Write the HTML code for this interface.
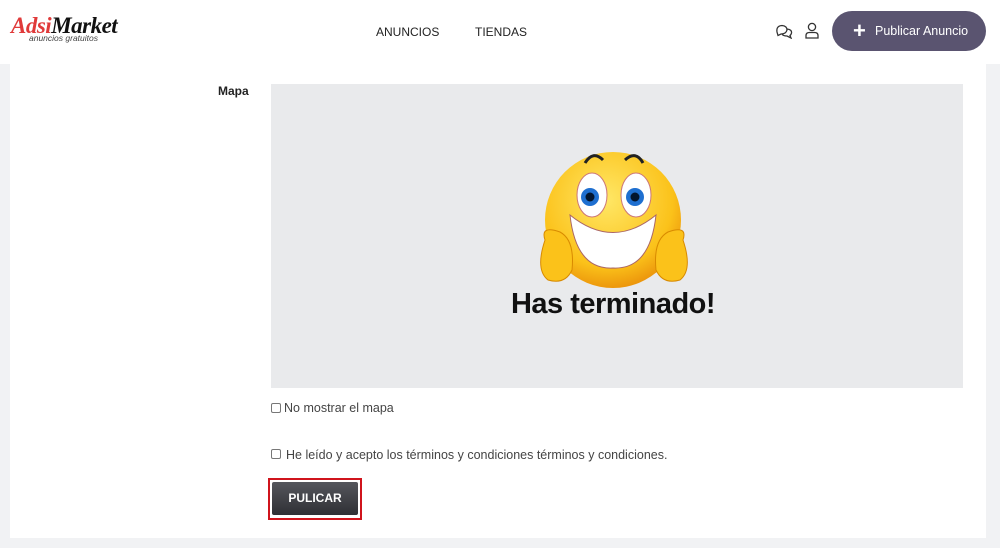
<!DOCTYPE html>
<html><head><meta charset="utf-8"><style>
*{margin:0;padding:0;box-sizing:border-box}
body{width:1000px;height:548px;background:#f1f2f4;font-family:"Liberation Sans",sans-serif;position:relative;overflow:hidden}
.hdr{position:absolute;left:0;top:0;width:1000px;height:64px;background:#fff}
.card{position:absolute;left:10px;top:64px;width:976px;height:474px;background:#fff}
.abs{position:absolute}
.nav{font-size:12px;color:#222;top:25px}
.btn{left:832px;top:11px;width:154px;height:40px;border-radius:20px;background:#5a5470;color:#fff;font-size:12.5px;line-height:40px}
.map{left:271px;top:84px;width:692px;height:304px;background:#e9eaec}
.cb{width:10px;height:10px;border:1px solid #777;border-radius:2px;background:#fff}
.t{font-size:12.5px;color:#444}
</style></head><body>
<div class="hdr"></div>
<div class="abs" style="left:11px;top:13px;font-family:'Liberation Serif',serif;font-weight:bold;font-style:italic;font-size:23px;letter-spacing:-0.5px;line-height:26px"><span style="color:#e03a3a">Adsi</span><span style="color:#111">Market</span></div>
<div class="abs" style="left:29px;top:33px;font-size:8.5px;font-style:italic;color:#444">anuncios gratuitos</div>
<div class="abs nav" style="left:376px">ANUNCIOS</div>
<div class="abs nav" style="left:475px">TIENDAS</div>
<svg class="abs" style="left:775px;top:23px" width="18" height="16" viewBox="0 0 18 16" fill="none" stroke="#333" stroke-width="1.3"><path d="M2 9 Q1 3 7 2.5 Q12 3 12 7 Q11 11 6 11 L3 12.5 Z"/><path d="M12 6 Q17 6.5 16.5 10 Q16 12 15 12.5 L16 15 L12 13 Q8 13 7 11"/></svg>
<svg class="abs" style="left:805px;top:22px" width="14" height="17" viewBox="0 0 14 17" fill="none" stroke="#333" stroke-width="1.3"><circle cx="7" cy="5" r="3.6"/><path d="M1 16 V13.5 Q1 10.5 4.5 10.5 H9.5 Q13 10.5 13 13.5 V16 Z"/></svg>
<div class="abs btn"><span style="position:absolute;left:21px;top:0;font-size:22px;font-weight:bold">+</span><span style="position:absolute;left:43px">Publicar Anuncio</span></div>
<div class="card"></div>
<div class="abs" style="left:218px;top:84px;font-size:12px;font-weight:bold;color:#222">Mapa</div>
<div class="abs map"></div>
<svg class="abs" style="left:530px;top:145px" width="170" height="150" viewBox="530 145 170 150">
<defs><radialGradient id="g" cx="0.45" cy="0.35" r="0.7"><stop offset="0" stop-color="#ffe766"/><stop offset="0.7" stop-color="#fbc21a"/><stop offset="1" stop-color="#e88a08"/></radialGradient></defs>
<circle cx="613" cy="220" r="68" fill="url(#g)"/>
<path d="M585 163 Q593 150 603 160" stroke="#222" stroke-width="3" fill="none"/>
<path d="M625 160 Q636 150 643 163" stroke="#222" stroke-width="3" fill="none"/>
<ellipse cx="592" cy="195" rx="15" ry="22" fill="#fff" stroke="#c77" stroke-width="1"/>
<ellipse cx="636" cy="195" rx="15" ry="22" fill="#fff" stroke="#c77" stroke-width="1"/>
<circle cx="590" cy="197" r="9" fill="#1e6fd0"/><circle cx="590" cy="197" r="4.5" fill="#02152e"/>
<circle cx="635" cy="197" r="9" fill="#1e6fd0"/><circle cx="635" cy="197" r="4.5" fill="#02152e"/>
<path d="M570 215 Q613 250 656 215 Q650 270 613 268 Q576 270 570 215 Z" fill="#fff" stroke="#a66" stroke-width="1"/>
<path d="M545 240 Q540 225 560 232 Q575 240 572 270 Q565 285 548 280 Q535 270 545 240 Z" fill="#fbc21a" stroke="#d88a00"/>
<path d="M683 240 Q688 225 668 232 Q653 240 656 270 Q663 285 680 280 Q693 270 683 240 Z" fill="#fbc21a" stroke="#d88a00"/>
</svg>
<div class="abs" style="left:500px;top:288px;width:226px;text-align:center;font-weight:bold;font-size:29px;color:#111;letter-spacing:-0.5px">Has terminado!</div>
<div class="abs cb" style="left:271px;top:403px"></div>
<div class="abs t" style="left:284px;top:401px">No mostrar el mapa</div>
<div class="abs cb" style="left:271px;top:449px"></div>
<div class="abs t" style="left:286px;top:448px">He leído y acepto los términos y condiciones términos y condiciones.</div>
<div class="abs" style="left:268px;top:478px;width:94px;height:42px;border:2px solid #d0141c"></div>
<div class="abs" style="left:272px;top:482px;width:86px;height:33px;background:linear-gradient(#55565c,#2f3035);border-radius:2px;color:#fff;font-weight:bold;font-size:12px;line-height:33px;text-align:center">PULICAR</div>
</body></html>
